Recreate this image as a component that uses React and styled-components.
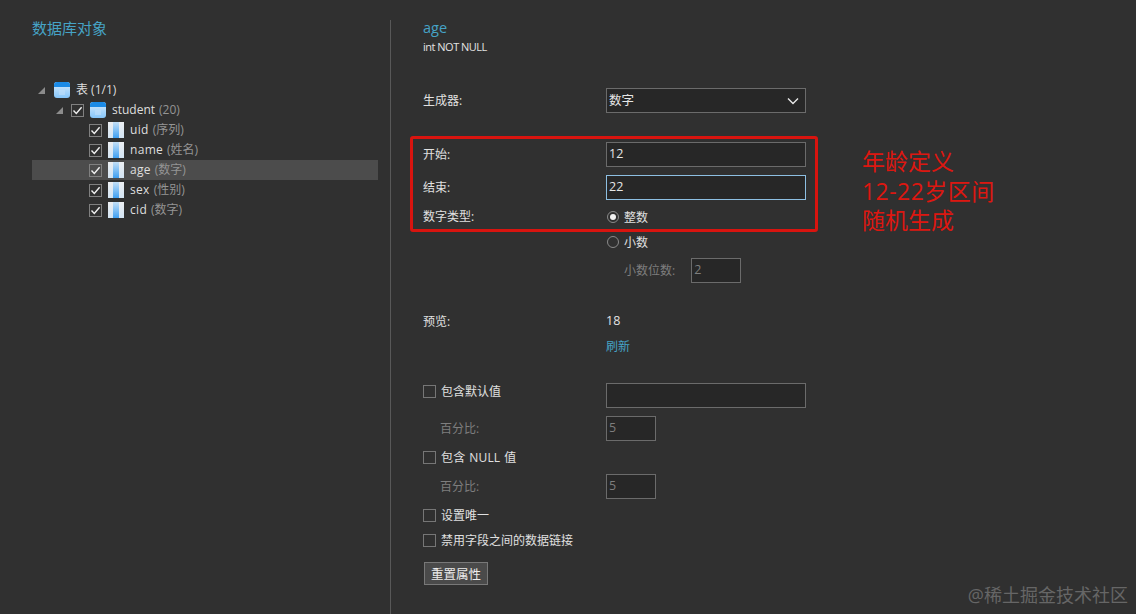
import React from "react";
import styled, { createGlobalStyle } from "styled-components";

const FONT = `"Open Sans", "Noto Sans", "Noto Sans CJK SC", sans-serif`;
const Global = createGlobalStyle`
  html, body { margin: 0; padding: 0; background: #303030; }
  body { width: 1136px; height: 614px; overflow: hidden; font-family: ${FONT}; font-size: 12px; color: #e2e2e2; }
  * { box-sizing: border-box; }
`;

const Page = styled.div`
  position: relative;
  width: 1136px;
  height: 614px;
  display: flex;
  background: #303030;
`;
const LeftPane = styled.aside`
  width: 391px;
  margin-top: 20px;
  padding: 0 12px 0 32px;
  border-right: 1px solid #585858;
  flex: none;
  height: 594px;
`;
const RightPane = styled.main`
  flex: 1;
  padding: 20px 0 0 32px;
`;
const Heading = styled.h2`
  margin: 0;
  font-size: 15px;
  line-height: 16px;
  font-weight: 400;
  color: #46a3c6;
`;
const Tree = styled.div`
  margin-top: 44px;
  width: 346px;
`;
const TreeRow = styled.div`
  height: 20px;
  display: flex;
  align-items: center;
  padding-left: ${p => p.$indent}px;
  background: ${p => (p.$selected ? "#4c4c4c" : "transparent")};
`;
const Arrow = styled.svg`
  width: 7px;
  height: 7px;
  margin-right: ${p => p.$gap}px;
  flex: none;
`;
const TreeCheck = styled.span`
  width: 13px;
  height: 13px;
  border: 1px solid #808080;
  display: flex;
  align-items: center;
  justify-content: center;
  margin-right: 6px;
  flex: none;
`;
const NodeIcon = styled.svg`
  width: 16px;
  height: 16px;
  margin-right: 6px;
  flex: none;
`;
const NodeName = styled.span`
  font-size: 12px;
  color: #dedede;
  padding-bottom: 2px;
  letter-spacing: ${p => (p.$spaced ? 0.3 : 0)}px;
  white-space: nowrap;
`;
const NodeMeta = styled.span`
  color: #949494;
  margin-left: 4px;
  letter-spacing: 0;
`;
const Title = styled.h3`
  margin: 0;
  font-size: 14.5px;
  line-height: 16px;
  font-weight: 400;
  color: #46a3c6;
`;
const Subtitle = styled.div`
  font-size: 11px;
  line-height: 14px;
  margin-top: 4px;
  letter-spacing: -0.5px;
  color: #e2e2e2;
`;
const Row = styled.div`
  display: grid;
  grid-template-columns: 183px 200px;
  align-items: center;
  height: ${p => p.$h}px;
  margin-top: ${p => p.$top}px;
`;
const Label = styled.label`
  font-size: 12px;
  line-height: 16px;
  color: ${p => (p.$muted ? "#7e7e7e" : "#e0e0e0")};
  padding-left: ${p => (p.$indent ? 17 : 0)}px;
  white-space: nowrap;
`;
const Field = styled.div`
  height: 25px;
  width: ${p => p.$w || 200}px;
  background: #272727;
  border: 1px solid ${p => (p.$focus ? "#8dbfe2" : "#6b6b6b")};
  padding: 0 2px 2px;
  display: flex;
  align-items: center;
  justify-content: space-between;
  font-size: 12.5px;
  color: ${p => (p.$muted ? "#7e7e7e" : "#e6e6e6")};
`;
const SelectChevron = styled.svg`
  width: 12px;
  height: 8px;
  margin: 2px 4px 0 0;
`;
const RadioLine = styled.div`
  display: flex;
  align-items: center;
  gap: 5px;
  font-size: 12px;
  color: #e0e0e0;
`;
const Radio = styled.span`
  width: 12px;
  height: 12px;
  margin-left: 1px;
  border-radius: 50%;
  border: 1px solid #8a8a8a;
  display: flex;
  align-items: center;
  justify-content: center;
  &::after {
    content: "";
    display: ${p => (p.$on ? "block" : "none")};
    width: 6px;
    height: 6px;
    border-radius: 50%;
    background: #f2f2f2;
  }
`;
const DecimalLine = styled.div`
  display: flex;
  align-items: center;
  padding-left: 18px;
  gap: 16px;
`;
const Value = styled.div`
  font-size: 12.5px;
  padding-bottom: 2px;
  color: #e4e4e4;
`;
const LinkText = styled.a`
  font-size: 12px;
  padding-bottom: 2px;
  color: #46a3c6;
`;
const CheckLine = styled.div`
  display: flex;
  align-items: center;
  align-self: start;
  height: 16px;
  gap: 5px;
  font-size: 12px;
  color: #e0e0e0;
  white-space: nowrap;
`;
const Wide = styled.span`
  letter-spacing: 0.2px;
  word-spacing: 0.5px;
`;
const Box = styled.span`
  width: 13px;
  height: 13px;
  border: 1px solid #767676;
  flex: none;
`;
const ResetButton = styled.button`
  display: block;
  width: 64px;
  height: 23px;
  margin: 14px 0 0 1px;
  padding: 0;
  background: #4a4a4a;
  border: 1px solid #787878;
  color: #ececec;
  font: 12.5px ${FONT};
`;
const RedFrame = styled.div`
  position: absolute;
  left: 410px;
  top: 136px;
  width: 408px;
  height: 96px;
  border: 3px solid #d8140f;
  border-radius: 3px;
`;
const Note = styled.div`
  position: absolute;
  left: 862px;
  top: 147px;
  font-size: 23px;
  line-height: 29.5px;
  font-weight: 400;
  color: #dd1710;
  white-space: nowrap;
`;
const NoteRange = styled.span`
  letter-spacing: 0.45px;
`;
const Watermark = styled.div`
  position: absolute;
  right: 8px;
  top: 585px;
  font-size: 18px;
  line-height: 20px;
  color: #666;
  white-space: nowrap;
`;

const Tick = () => (
  <svg width="11" height="11" viewBox="0 0 11 11">
    <path d="M1.5 5.5 L4.3 8.4 L9.6 2.2" fill="none" stroke="#f0f0f0" strokeWidth="1.4" />
  </svg>
);
const Tri = ({ gap }) => (
  <Arrow $gap={gap} viewBox="0 0 7 7">
    <path d="M7 0 V7 H0 Z" fill="#8c8c8c" />
  </Arrow>
);
const TableIcon = ({ id }) => (
  <NodeIcon viewBox="0 0 16 16">
    <defs>
      <linearGradient id={id} x1="0" y1="0" x2="0" y2="1">
        <stop offset="0" stopColor="#d8ebfb" />
        <stop offset="1" stopColor="#86c6fb" />
      </linearGradient>
    </defs>
    <rect x="0" y="0" width="16" height="16" rx="3" fill={`url(#${id})`} />
    <path d="M0 5 V3 a3 3 0 0 1 3 -3 H13 a3 3 0 0 1 3 3 V5 Z" fill="#1a8ae6" />
    <rect x="5" y="8" width="6" height="5" fill="#bfe0fb" opacity="0.6" />
  </NodeIcon>
);
const ColumnIcon = ({ id }) => (
  <NodeIcon viewBox="0 0 16 16">
    <defs>
      <linearGradient id={id} x1="0" y1="0" x2="0" y2="1">
        <stop offset="0" stopColor="#c4e0f7" />
        <stop offset="1" stopColor="#3f9ff1" />
      </linearGradient>
      <linearGradient id={`${id}s`} x1="0" y1="0" x2="0" y2="1">
        <stop offset="0" stopColor="#eceff2" />
        <stop offset="1" stopColor="#d3e4f3" />
      </linearGradient>
    </defs>
    <rect x="0" y="0" width="16" height="16" fill={`url(#${id}s)`} />
    <rect x="5" y="0" width="6" height="16" fill={`url(#${id})`} />
  </NodeIcon>
);

const columns = [
  ["uid", "(序列)"],
  ["name", "(姓名)"],
  ["age", "(数字)"],
  ["sex", "(性别)"],
  ["cid", "(数字)"],
];

export default function App() {
  return (
    <Page>
      <Global />
      <LeftPane>
        <Heading>数据库对象</Heading>
        <Tree>
          <TreeRow $indent={6}>
            <Tri gap={9} />
            <TableIcon id="t0" />
            <NodeName>表 (1/1)</NodeName>
          </TreeRow>
          <TreeRow $indent={24}>
            <Tri gap={8} />
            <TreeCheck><Tick /></TreeCheck>
            <TableIcon id="t1" />
            <NodeName>student<NodeMeta>(20)</NodeMeta></NodeName>
          </TreeRow>
          {columns.map(([name, meta], i) => (
            <TreeRow key={name} $indent={57} $selected={name === "age"}>
              <TreeCheck><Tick /></TreeCheck>
              <ColumnIcon id={`c${i}`} />
              <NodeName $spaced>{name}<NodeMeta>{meta}</NodeMeta></NodeName>
            </TreeRow>
          ))}
        </Tree>
      </LeftPane>
      <RightPane>
        <Title>age</Title>
        <Subtitle>int NOT NULL</Subtitle>
        <Row $h={25} $top={34}>
          <Label>生成器:</Label>
          <Field>
            数字
            <SelectChevron viewBox="0 0 12 8">
              <path d="M1 1.5 L6 6.5 L11 1.5" fill="none" stroke="#e8e8e8" strokeWidth="1.4" />
            </SelectChevron>
          </Field>
        </Row>
        <Row $h={25} $top={29}>
          <Label>开始:</Label>
          <Field>12</Field>
        </Row>
        <Row $h={25} $top={8}>
          <Label>结束:</Label>
          <Field $focus>22</Field>
        </Row>
        <Row $h={16} $top={8}>
          <Label>数字类型:</Label>
          <RadioLine><Radio $on />整数</RadioLine>
        </Row>
        <Row $h={16} $top={9}>
          <span />
          <RadioLine><Radio />小数</RadioLine>
        </Row>
        <Row $h={25} $top={9}>
          <span />
          <DecimalLine>
            <Label $muted>小数位数:</Label>
            <Field $w={50} $muted>2</Field>
          </DecimalLine>
        </Row>
        <Row $h={16} $top={29}>
          <Label>预览:</Label>
          <Value>18</Value>
        </Row>
        <Row $h={16} $top={9}>
          <span />
          <LinkText>刷新</LinkText>
        </Row>
        <Row $h={25} $top={30}>
          <CheckLine><Box />包含默认值</CheckLine>
          <Field $muted />
        </Row>
        <Row $h={25} $top={8}>
          <Label $muted $indent>百分比:</Label>
          <Field $w={50} $muted>5</Field>
        </Row>
        <Row $h={16} $top={8}>
          <CheckLine><Box /><Wide>包含 NULL 值</Wide></CheckLine>
        </Row>
        <Row $h={25} $top={9}>
          <Label $muted $indent>百分比:</Label>
          <Field $w={50} $muted>5</Field>
        </Row>
        <Row $h={16} $top={8}>
          <CheckLine><Box />设置唯一</CheckLine>
        </Row>
        <Row $h={16} $top={9}>
          <CheckLine><Box />禁用字段之间的数据链接</CheckLine>
        </Row>
        <ResetButton>重置属性</ResetButton>
      </RightPane>
      <RedFrame />
      <Note>年龄定义<br /><NoteRange>12-22岁区间</NoteRange><br />随机生成</Note>
      <Watermark>@稀土掘金技术社区</Watermark>
    </Page>
  );
}
